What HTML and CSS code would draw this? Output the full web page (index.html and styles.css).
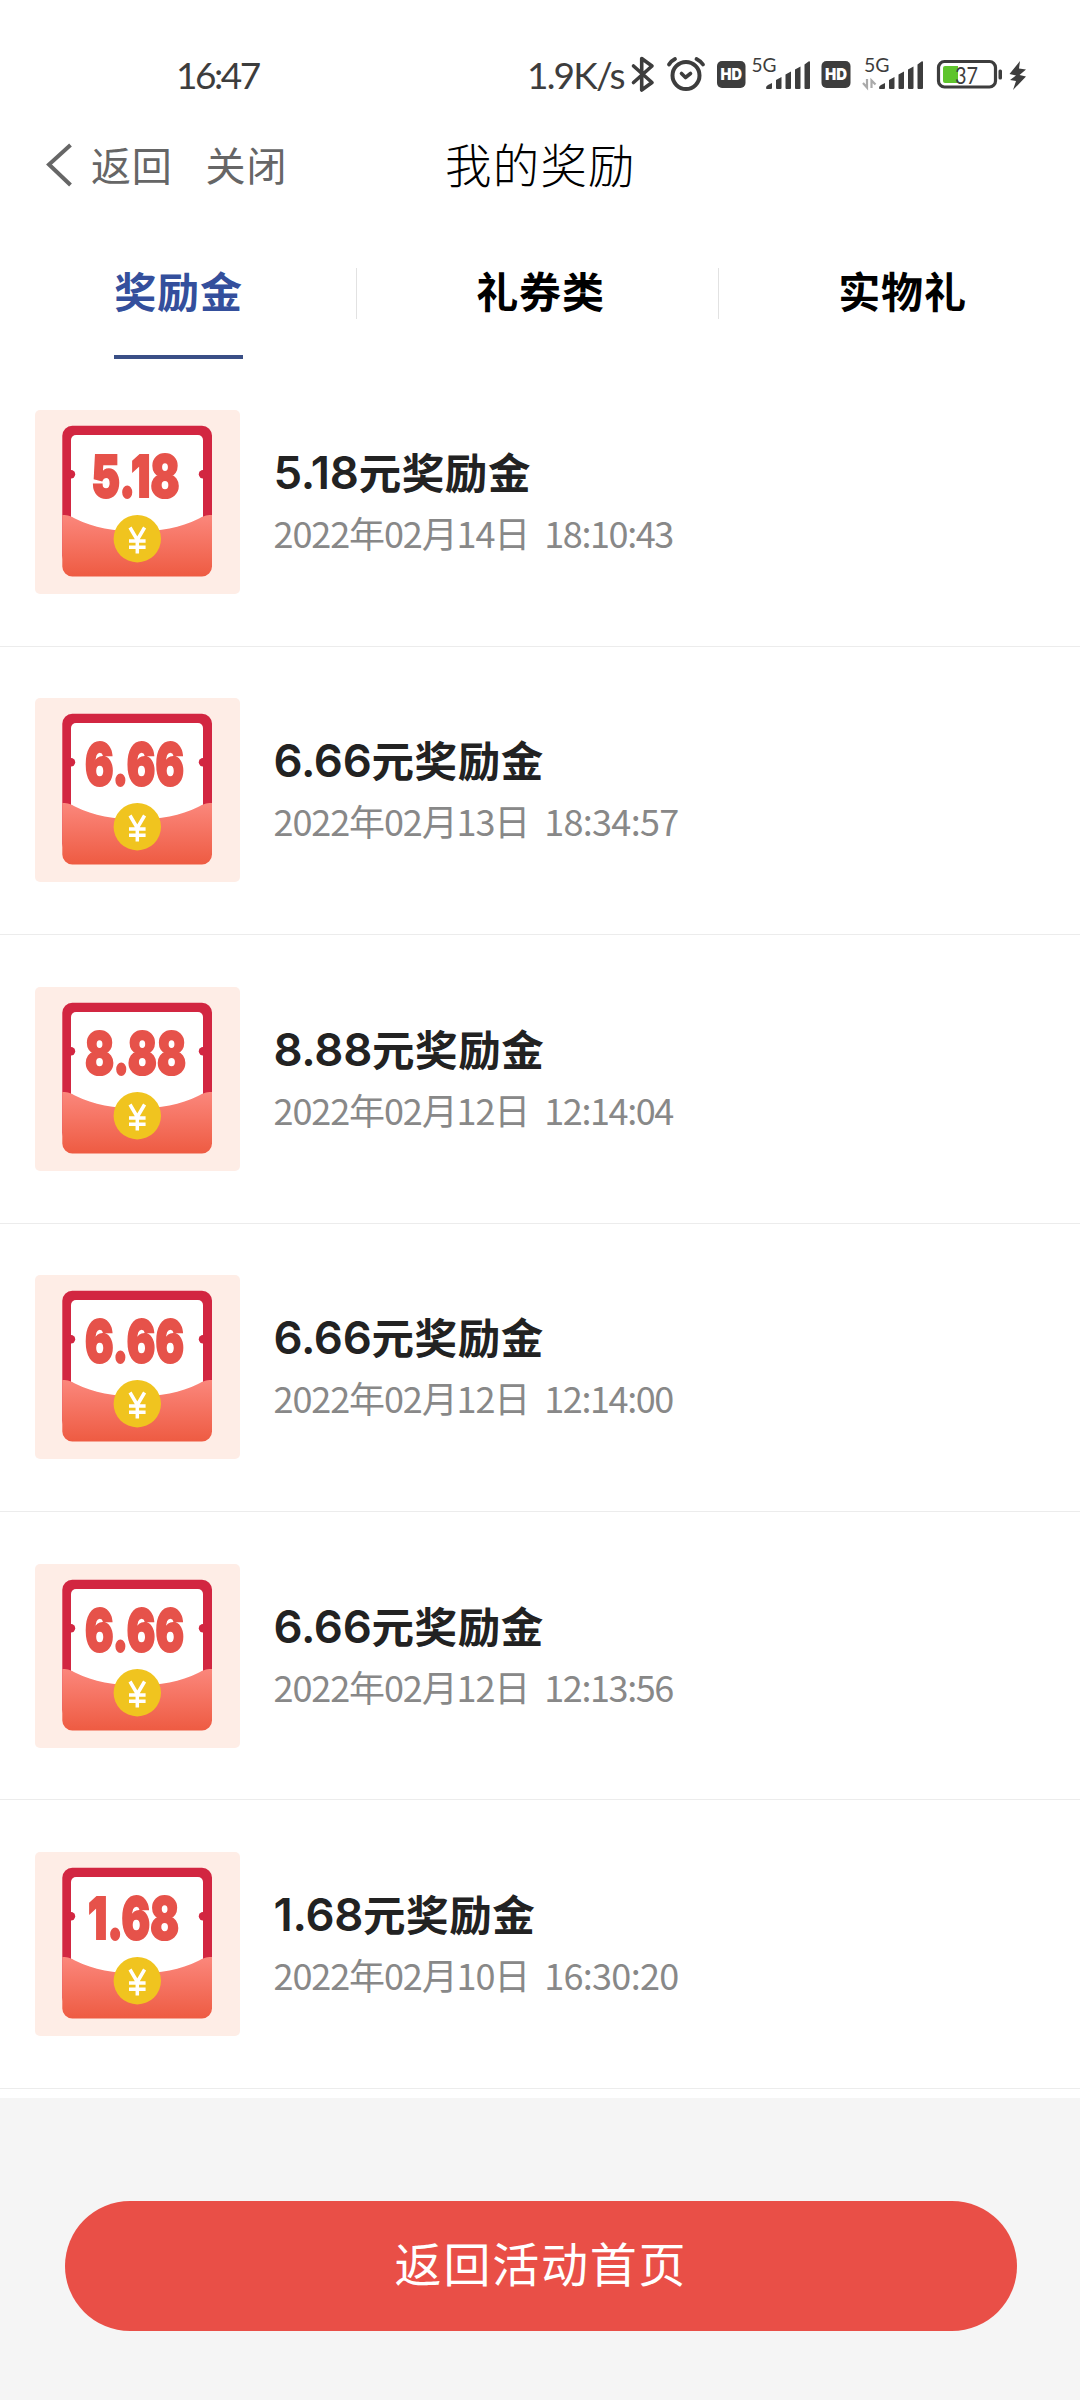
FILE: index.html
```html
<!DOCTYPE html>
<html lang="zh-CN">
<head>
<meta charset="utf-8">
<title>我的奖励</title>
<link rel="stylesheet" href="styles.css">
</head>
<body>
<svg class="defs" width="0" height="0">
  <defs>
    <linearGradient id="pocket" x1="0" y1="0" x2="0" y2="1">
      <stop offset="0" stop-color="#fb877c"/><stop offset="1" stop-color="#ee5b42"/>
    </linearGradient>
    <symbol id="envelope" viewBox="0 0 205 184">
      <rect x="27.3" y="15.7" width="149.7" height="140" rx="10" fill="#d22641"/>
      <path d="M36 130V30a5 5 0 0 1 5-5H163a5 5 0 0 1 5 5V130Z" fill="#fff"/>
      <circle cx="36" cy="64.3" r="4.2" fill="#d22641"/><circle cx="168" cy="64.3" r="4.2" fill="#d22641"/>
      <path d="M27.3 105C34 105 35 106 41 109C58 117.500 80 121.500 102.200 121.500S146 117.500 163 109C169 106 170 105 177 105V156.500a10 10 0 0 1-10 10H37.300a10 10 0 0 1-10-10Z" fill="url(#pocket)"/>
      <circle cx="102.300" cy="128.700" r="23.700" fill="#f0c41f"/>
      <path d="M95 117.500L102.300 130L109.600 117.500M94 131H110.600M94 137.200H110.600M102.300 130V143.500" fill="none" stroke="#fff" stroke-width="3.500"/>
    </symbol>
    <symbol id="signal" viewBox="0 0 45 29">
      <path d="M0 27.500Q0 25.500 2 24.500L6 22.500V27.500Q6 28.500 5 28.500H1Q0 28.500 0 27.500ZM10 19.500L15.500 16.500V27.500Q15.500 28.500 14.500 28.500H11Q10 28.500 10 27.500ZM19.500 14L25 11V27.500Q25 28.500 24 28.500H20.500Q19.500 28.500 19.500 27.500ZM29 9L34.500 6V27.500Q34.500 28.500 33.500 28.500H30Q29 28.500 29 27.500ZM38.500 4L42.500 1Q44 0 44 2V27.500Q44 28.500 43 28.500H39.500Q38.500 28.500 38.500 27.500Z" fill="#3d3d3d"/>
    </symbol>
  </defs>
</svg>

<header class="status">
  <span class="clock">16:47</span>
  <span class="speed">1.9K/s</span>
  <svg class="status-icons" width="400" height="50" viewBox="630 50 400 50">
    <g fill="none" stroke="#3d3d3d" stroke-linecap="round" stroke-linejoin="round">
      <path d="M633.500 66L652 82.500L641.700 90V58.500L652 66L633.500 82.500" stroke-width="3.600"/>
      <circle cx="686" cy="75.500" r="13.500" stroke-width="4"/>
      <path d="M681.500 73.500L685.500 77.500L690.500 73.500" stroke-width="3.600"/>
      <path d="M669 64.500Q671 61 675 59M696.500 59Q700.500 61 703 64.500" stroke-width="3.800"/>
      <rect x="938.500" y="61.500" width="57" height="25.500" rx="6" stroke-width="3.200"/>
    </g>
    <rect x="717" y="61" width="28.500" height="27" rx="5" fill="#3d3d3d"/>
    <text x="720.500" y="80" textLength="21.500" lengthAdjust="spacingAndGlyphs" class="hd">HD</text>
    <text x="751.500" y="72" textLength="25" lengthAdjust="spacingAndGlyphs" class="net">5G</text>
    <use href="#signal" x="766" y="60.500" width="45" height="29"/>
    <rect x="821.500" y="61" width="29" height="27" rx="5" fill="#3d3d3d"/>
    <text x="825" y="80" textLength="22" lengthAdjust="spacingAndGlyphs" class="hd">HD</text>
    <text x="864" y="72" textLength="25.500" lengthAdjust="spacingAndGlyphs" class="net">5G</text>
    <path d="M863 83L867 87.500V79M871.500 88V80.500L875.500 84.500" fill="none" stroke="#aaa" stroke-width="2.200"/>
    <use href="#signal" x="879" y="60.500" width="45" height="29"/>
    <path d="M945 66H958V83H945Q943 83 943 81V68Q943 66 945 66Z" fill="#5ec42c"/>
    <text x="955" y="83.500" textLength="23" lengthAdjust="spacingAndGlyphs" class="charge">37</text>
    <rect x="998.500" y="69.500" width="3.500" height="10" rx="1.500" fill="#3d3d3d"/>
    <path d="M1020 61L1009.500 74L1016 75.500L1010 80L1016 81L1013 90L1026 76.500L1019.500 75L1026 69.500L1019 68.500Z" fill="#3d3d3d"/>
  </svg>
</header>

<nav class="navbar">
  <div class="nav-left">
    <svg class="chevron" width="27" height="44" viewBox="0 0 27 44"><path d="M24.500 2L3 21.500L24.500 42" fill="none" stroke="#666" stroke-width="4"/></svg>
    <span class="back">返回</span>
    <span>关闭</span>
  </div>
  <h1 class="title">我的奖励</h1>
</nav>

<div class="tabs">
  <div class="tab active"><span>奖励金</span></div>
  <div class="tab"><span>礼券类</span></div>
  <div class="tab"><span>实物礼</span></div>
</div>

<main class="list">
  <article class="item">
    <svg class="thumb" viewBox="0 0 205 184"><use href="#envelope"/><text x="56.500" y="87" textLength="88" lengthAdjust="spacingAndGlyphs">5.18</text></svg>
    <div class="info"><h2><span class="amount">5.18</span>元奖励金</h2><p>2022年02月14日 <span class="time">18:10:43</span></p></div>
  </article>
  <article class="item">
    <svg class="thumb" viewBox="0 0 205 184"><use href="#envelope"/><text x="50" y="87" textLength="99" lengthAdjust="spacingAndGlyphs">6.66</text></svg>
    <div class="info"><h2><span class="amount">6.66</span>元奖励金</h2><p>2022年02月13日 <span class="time wide">18:34:57</span></p></div>
  </article>
  <article class="item">
    <svg class="thumb" viewBox="0 0 205 184"><use href="#envelope"/><text x="50" y="87" textLength="101" lengthAdjust="spacingAndGlyphs">8.88</text></svg>
    <div class="info"><h2><span class="amount">8.88</span>元奖励金</h2><p>2022年02月12日 <span class="time">12:14:04</span></p></div>
  </article>
  <article class="item">
    <svg class="thumb" viewBox="0 0 205 184"><use href="#envelope"/><text x="50" y="87" textLength="99" lengthAdjust="spacingAndGlyphs">6.66</text></svg>
    <div class="info"><h2><span class="amount">6.66</span>元奖励金</h2><p>2022年02月12日 <span class="time">12:14:00</span></p></div>
  </article>
  <article class="item">
    <svg class="thumb" viewBox="0 0 205 184"><use href="#envelope"/><text x="50" y="87" textLength="99" lengthAdjust="spacingAndGlyphs">6.66</text></svg>
    <div class="info"><h2><span class="amount">6.66</span>元奖励金</h2><p>2022年02月12日 <span class="time">12:13:56</span></p></div>
  </article>
  <article class="item">
    <svg class="thumb" viewBox="0 0 205 184"><use href="#envelope"/><text x="53" y="87" textLength="91" lengthAdjust="spacingAndGlyphs">1.68</text></svg>
    <div class="info"><h2><span class="amount">1.68</span>元奖励金</h2><p>2022年02月10日 <span class="time wide">16:30:20</span></p></div>
  </article>
</main>

<footer class="footer">
  <button class="home">返回活动首页</button>
</footer>
</body>
</html>
```
FILE: styles.css
```css
* { box-sizing: border-box; margin: 0; padding: 0; }
body {
  width: 1080px; height: 2400px; overflow: hidden;
  display: flex; flex-direction: column;
  background: #fff; color: #000;
  font-family: "Noto Sans CJK SC", sans-serif;
}
.defs { display: block; position: absolute; }
.status {
  height: 110px; padding: 50px 50px 0 176px;
  display: flex; color: #3d3d3d;
  font-family: Lato, sans-serif; font-size: 37px; line-height: 49px;
}
.clock { width: 351px; letter-spacing: -2.5px; }
.speed { width: 103px; letter-spacing: -1.8px; }
.status-icons { flex: none; }
.hd { font: 900 16px Inter, sans-serif; fill: #fff; }
.net { font: 400 19px Lato, sans-serif; fill: #3d3d3d; }
.charge { font: 400 24px Lato, sans-serif; fill: #3d3d3d; }

.navbar {
  height: 107px; display: grid; grid-template-columns: 445px 1fr;
  align-items: center;
}
.nav-left { display: flex; align-items: center; padding-left: 46px; color: #666; font-size: 40px; line-height: 60px; letter-spacing: 0.8px; }
.chevron { margin: 2px 18px 0 0; }
.back { margin-right: 33px; }
.title { font-size: 46.5px; font-weight: 300; letter-spacing: 1.2px; line-height: 68px; padding-bottom: 2px; }

.tabs { height: 141.4px; display: grid; grid-template-columns: 357px 362px 361px; padding-top: 38px; }
.tab {
  display: flex; justify-content: center;
  font-size: 42px; font-weight: 700; line-height: 70px; height: 104px;
  background: linear-gradient(#e2e2e2, #e2e2e2) right 13px / 1px 51px no-repeat;
}
.tab + .tab { padding-left: 5px; }
.tab:last-child { background: none; padding-left: 6px; }
.tab span { letter-spacing: 0.9px; padding: 0 0.5px; }
.active span { color: #344f9c; border-bottom: 4px solid #3a4f86; }

.item { height: 288.4px; padding: 51.6px 34.5px 0; display: flex; gap: 34px; border-bottom: 1px solid #ececec; }
.thumb { width: 205px; height: 184px; flex: none; border-radius: 5px; background: #feede6; }
.thumb text { font: 900 58px Inter, sans-serif; fill: #e6524a; stroke: #e6524a; stroke-width: 2; }
.info { padding-top: 31px; white-space: nowrap; }
.info h2 { font-size: 42.5px; line-height: 60px; font-weight: 700; color: #222; letter-spacing: 0.6px; }
.amount { font-family: Inter, sans-serif; font-size: 45.5px; font-weight: 600; letter-spacing: -0.3px; }
.info p { font-size: 36px; line-height: 58px; color: #888; letter-spacing: -1.1px; }
.time { margin-left: 8px; letter-spacing: -1.4px; }
.wide { letter-spacing: -0.7px; }

.footer { margin-top: 9px; flex: 1; background: #f5f5f5; padding: 103px 63px 0 65px; }
.home {
  display: block; width: 952px; height: 130px; border: 0; border-radius: 65px; padding-bottom: 8px;
  background: #e94f47; color: #fff; font: 400 47px "Noto Sans CJK SC", sans-serif; letter-spacing: 1.8px;
}
```
